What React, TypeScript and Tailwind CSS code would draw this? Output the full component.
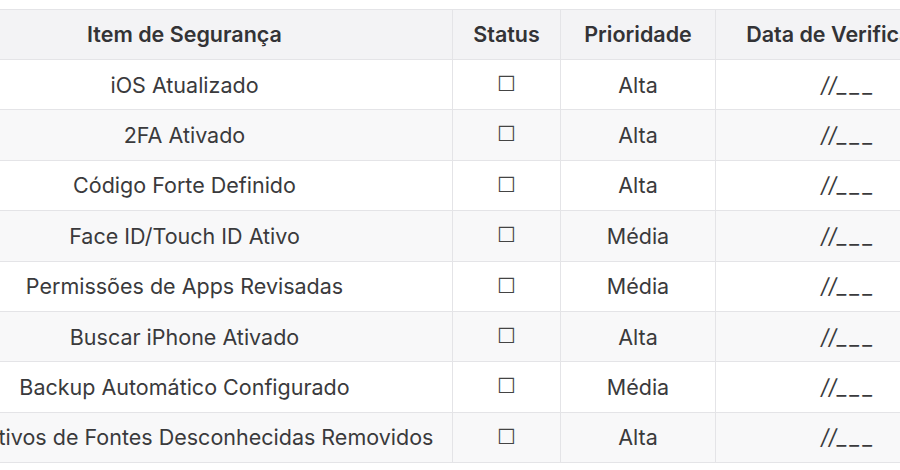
const rows = [
  { item: "iOS Atualizado", prioridade: "Alta" },
  { item: "2FA Ativado", prioridade: "Alta" },
  { item: "Código Forte Definido", prioridade: "Alta" },
  { item: "Face ID/Touch ID Ativo", prioridade: "Média" },
  { item: "Permissões de Apps Revisadas", prioridade: "Média" },
  { item: "Buscar iPhone Ativado", prioridade: "Alta" },
  { item: "Backup Automático Configurado", prioridade: "Média" },
  { item: "Aplicativos de Fontes Desconhecidas Removidos", prioridade: "Alta" },
];

export default function App() {
  return (
    <div className="w-[900px] h-[470px] overflow-hidden bg-white font-['Inter',sans-serif] text-[#3a3a3c]">
      <div className="pt-[9px] ml-[-84px] w-[1064px]">
        <table className="table-fixed border-collapse text-[21.5px] w-[1064px]">
          <colgroup>
            <col className="w-[536px]" />
            <col className="w-[108px]" />
            <col className="w-[155px]" />
            <col className="w-[265px]" />
          </colgroup>
          <thead>
            <tr className="h-[50px] bg-[#f3f3f5]">
              {["Item de Segurança", "Status", "Prioridade", "Data de Verificação"].map((h) => (
                <th
                  key={h}
                  className="border border-[#e4e4e7] px-2 text-center font-semibold text-[#333336] whitespace-nowrap"
                >
                  {h}
                </th>
              ))}
            </tr>
          </thead>
          <tbody>
            {rows.map((r, i) => (
              <tr key={r.item} className={`h-[50.4px] ${i % 2 === 1 ? "bg-[#f8f8f9]" : "bg-white"}`}>
                <td className="border border-[#e4e4e7] px-2 text-center whitespace-nowrap">{r.item}</td>
                <td className="border border-[#e4e4e7] px-2 text-center font-['DejaVu_Sans',sans-serif] text-[21px] text-[#444]">☐</td>
                <td className="border border-[#e4e4e7] px-2 text-center">{r.prioridade}</td>
                <td className="border border-[#e4e4e7] px-2 text-center">
                  <span className="italic">//</span>
                  <span className="tracking-[3px]">___</span>
                </td>
              </tr>
            ))}
          </tbody>
        </table>
      </div>
    </div>
  );
}
